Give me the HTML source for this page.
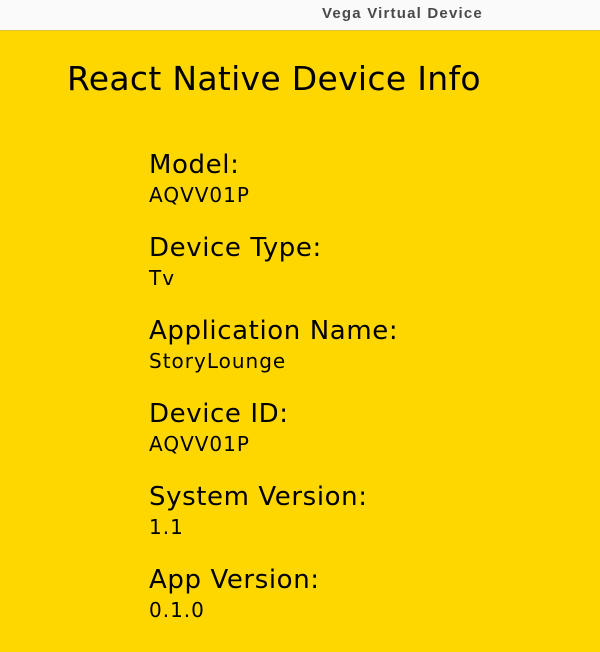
<!DOCTYPE html>
<html><head><style>
body{margin:0;width:600px;height:652px;overflow:hidden;background:#FFD700;font-family:"DejaVu Sans",sans-serif;position:relative}
.bar{position:absolute;left:0;top:0;width:600px;height:30px;background:#fafafa;border-bottom:1px solid #e2c23a}
.bar span{position:absolute;left:322px;top:6px;font-family:"Liberation Sans",sans-serif;font-weight:bold;font-size:15px;letter-spacing:1.2px;color:#4a4a4a;line-height:1}
.t{position:absolute;line-height:1;color:#000;white-space:nowrap}
.h{left:67px;font-size:33px;top:62px;letter-spacing:0.3px}
.l{left:149px;font-size:26px;letter-spacing:0.6px}
.v{left:149px;font-size:20px;letter-spacing:1px}
</style></head><body>
<div class="bar"><span>Vega Virtual Device</span></div>
<div class="t h">React Native Device Info</div>
<div class="t l" style="top:152px">Model:</div>
<div class="t v" style="top:185px">AQVV01P</div>
<div class="t l" style="top:235px">Device Type:</div>
<div class="t v" style="top:268px">Tv</div>
<div class="t l" style="top:318px">Application Name:</div>
<div class="t v" style="top:351px">StoryLounge</div>
<div class="t l" style="top:401px">Device ID:</div>
<div class="t v" style="top:434px">AQVV01P</div>
<div class="t l" style="top:484px">System Version:</div>
<div class="t v" style="top:517px">1.1</div>
<div class="t l" style="top:567px">App Version:</div>
<div class="t v" style="top:600px">0.1.0</div>
</body></html>
